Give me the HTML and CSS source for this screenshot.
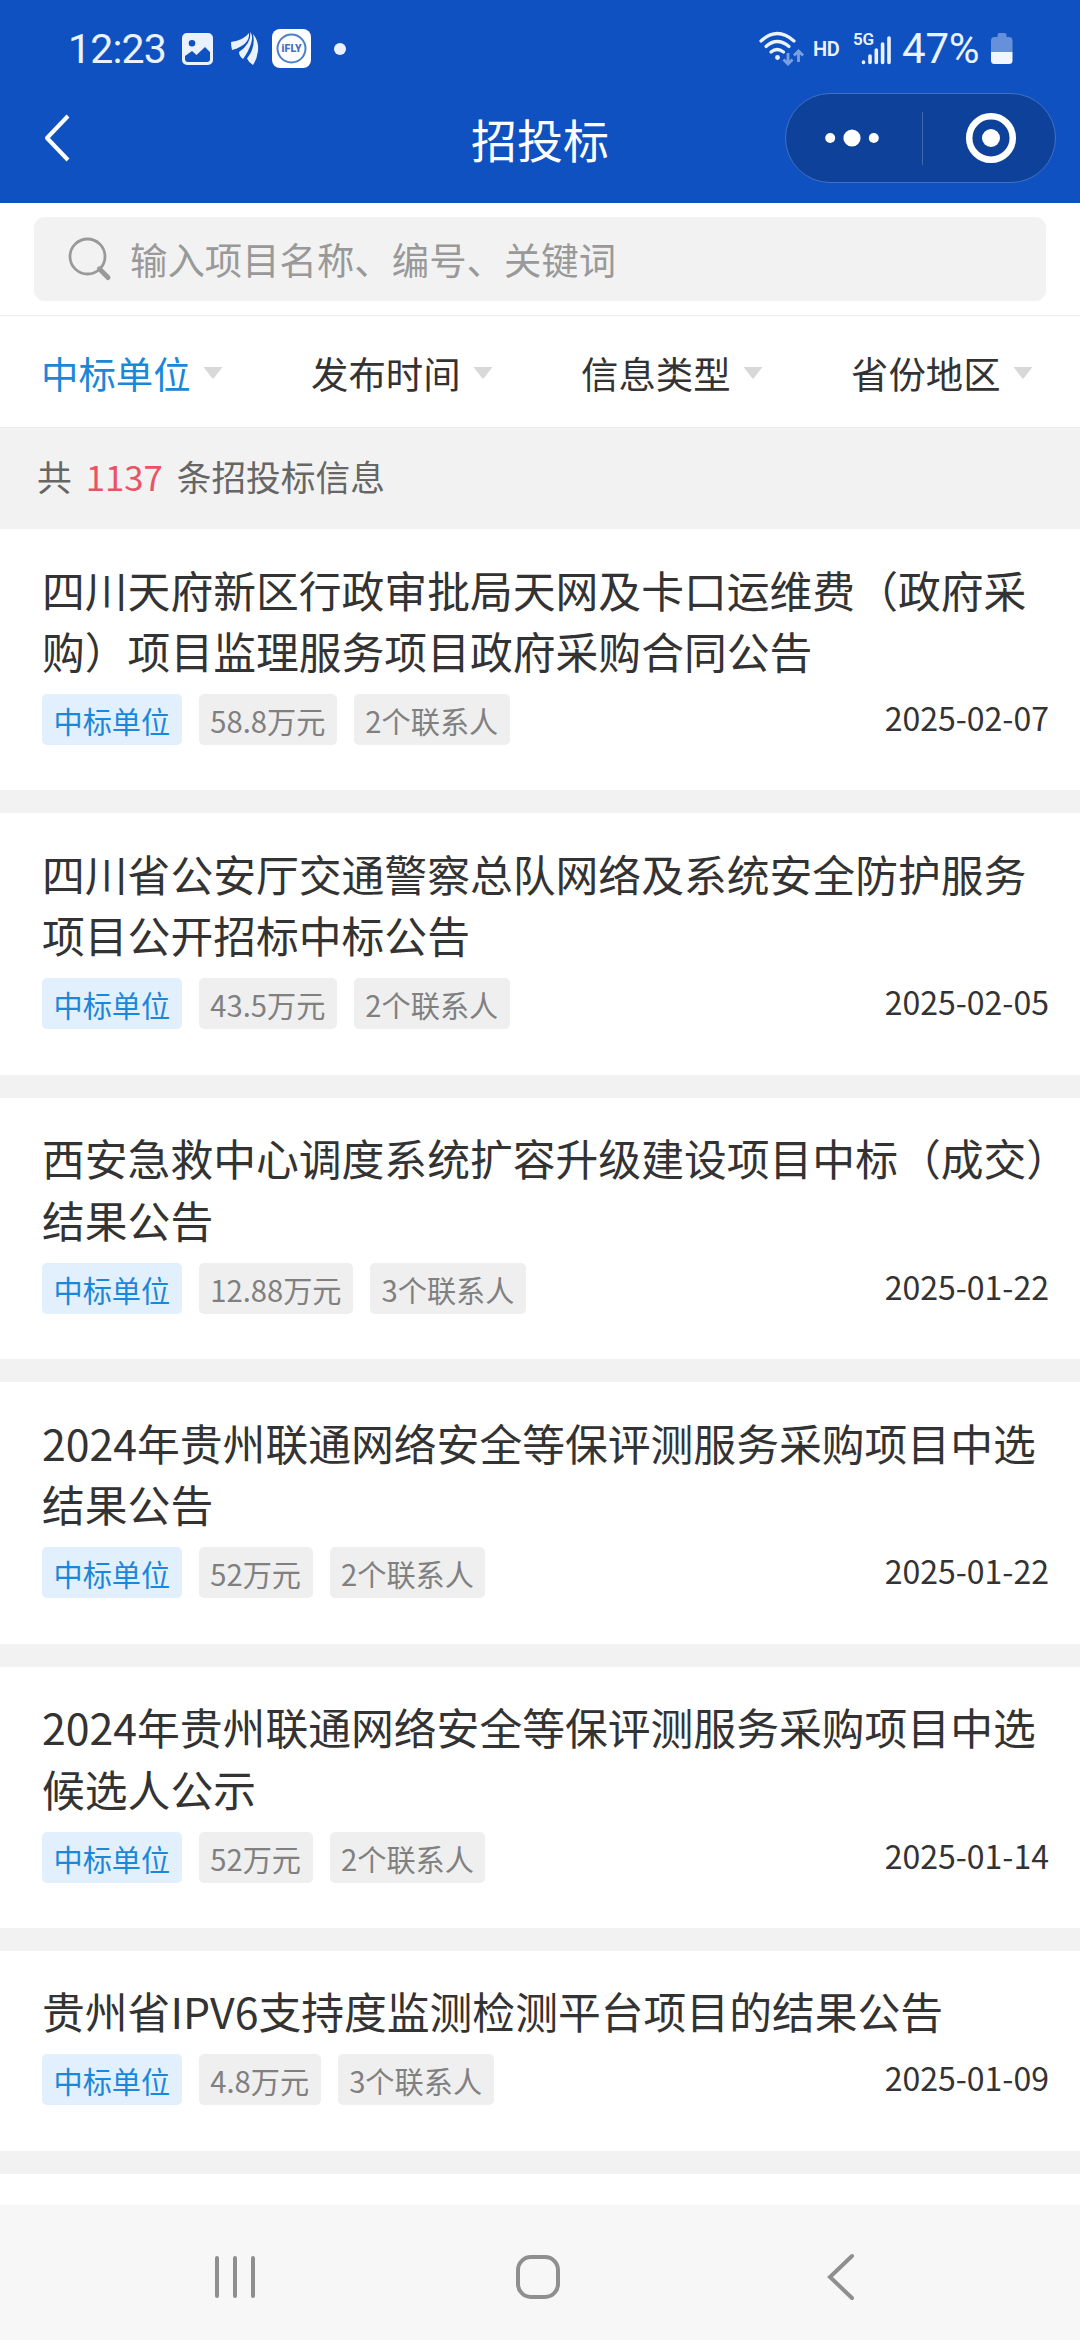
FILE: index.html
```
<!DOCTYPE html>
<html lang="zh-CN">

<head>
  <meta charset="UTF-8">
  <meta name="viewport" content="width=device-width, initial-scale=1.0">
  <title>招投标</title>
  <link rel="stylesheet" href="styles.css">
</head>

<body>
  <header>
    <!--Phone status bar-->
    <div class="status">
      <div class="status-left">
        <span class="clock">12:23</span>
        <svg class="ico-pic" width="31" height="32" viewBox="0 0 31 32">
          <path fill="#eaf2ff" fill-rule="evenodd" d="M5 0h21a5 5 0 0 1 5 5v22a5 5 0 0 1-5 5H5a5 5 0 0 1-5-5V5a5 5 0 0 1 5-5zM10 7a3.300 3.300 0 1 0 0 6.600a3.300 3.300 0 0 0 0-6.600zM3 23v3q0 3 3 3h19q3 0 3-3v-7l-5-5-8.500 8-4.500-4z" />
        </svg>
        <svg class="ico-wing" width="28" height="34" viewBox="0 0 28 34">
          <g fill="#eaf2ff">
            <path d="M0 10Q13 8 18 1Q19 13 1 18Q0 14 0 10z" />
            <path d="M19.500 0Q22 4 20.500 10Q18 19 12 27Q8 24 8 20Q20 12 19.500 0z" />
            <path d="M22 2Q28 9 27 19Q26 27 22 33Q18 31 16 26.500Q25 15 22 2z" />
          </g>
        </svg>
        <svg class="ico-fly" width="39" height="39" viewBox="0 0 39 39">
          <rect width="39" height="39" rx="8" fill="#fff" />
          <circle cx="19.500" cy="19.500" r="14" fill="none" stroke="#4a80cc" stroke-width="2" />
          <text x="19.500" y="23.200" text-anchor="middle" textLength="20">iFLY</text>
        </svg>
        <span class="dot"></span>
      </div>
      <div class="status-right">
        <svg width="46" height="36" viewBox="0 0 46 36">
          <g fill="none" stroke="#eaf2ff" stroke-width="3.200" stroke-linecap="round">
            <path d="M3 10Q19-5 36 10" />
            <path d="M8 15.500Q19 5.500 31 15.500" />
            <path d="M13 21Q19 16 25.500 21" />
          </g>
          <circle cx="19.500" cy="26.500" r="2.400" fill="#eaf2ff" />
          <path fill="none" stroke="#7ba0e2" stroke-width="2.800" d="M30 22v11M25.500 28.500l4.500 4.500 4.500-4.500M40.500 31V20M36 24.500l4.500-4.500 4.500 4.500" />
        </svg>
        <span class="hd">HD</span>
        <svg class="ico-signal" width="40" height="36" viewBox="0 0 40 36">
          <text x="0" y="14" textLength="21">5G</text>
          <path fill="none" stroke="#eaf2ff" stroke-width="3.600" stroke-linecap="round" d="M10.500 31v.4M17 25v6.500M23.300 19v12.500M29.600 13v18.500M36 7v24.500" />
        </svg>
        <span class="percent">47%</span>
        <svg class="ico-battery" width="22" height="32" viewBox="0 0 22 32">
          <path fill="#6690da" d="M6.500 4V2q0-2 2-2h5q2 0 2 2v2h2.500q3.500 0 3.500 3.500V19H0V7.500Q0 4 3.500 4z" />
          <path fill="#f0f5ff" d="M0 19h21.500v8.500q0 3.500-3.500 3.500h-14.500q-3.500 0-3.500-3.500z" />
        </svg>
      </div>
    </div>

    <!--Mini program title bar-->
    <div class="navbar">
      <svg class="back" width="30" height="52" viewBox="0 0 30 52">
        <path d="M26 4L5 26l21 22" fill="none" stroke="#fff" stroke-width="4" stroke-linejoin="round" />
      </svg>
      <h1>招投标</h1>
      <div class="capsule">
        <svg width="54" height="20" viewBox="0 0 54 20" fill="#fff">
          <circle cx="5.200" cy="10" r="5" />
          <circle cx="27" cy="10" r="8.600" />
          <circle cx="48.800" cy="10" r="5" />
        </svg>
        <i></i>
        <svg width="52" height="52" viewBox="0 0 52 52">
          <circle cx="26" cy="26" r="21.800" fill="none" stroke="#fff" stroke-width="6.500" />
          <circle cx="26" cy="26" r="9" fill="#fff" />
        </svg>
      </div>
    </div>
  </header>

  <div class="search">
    <div class="search-box">
      <svg width="44" height="44" viewBox="0 0 44 44" fill="none" stroke="#999">
        <circle cx="19.500" cy="19.500" r="17.500" stroke-width="2.800" />
        <path d="M31.500 32l8.500 8.500" stroke-width="5" stroke-linecap="round" />
      </svg>
      <span>输入项目名称、编号、关键词</span>
    </div>
  </div>

  <div class="filters">
    <div class="filter active">中标单位<svg width="20" height="12" viewBox="0 0 20 12"><path d="M.5 0h19l-8.500 11q-1 1-2 0z" /></svg></div>
    <div class="filter">发布时间<svg width="20" height="12" viewBox="0 0 20 12"><path d="M.5 0h19l-8.500 11q-1 1-2 0z" /></svg></div>
    <div class="filter">信息类型<svg width="20" height="12" viewBox="0 0 20 12"><path d="M.5 0h19l-8.500 11q-1 1-2 0z" /></svg></div>
    <div class="filter">省份地区<svg width="20" height="12" viewBox="0 0 20 12"><path d="M.5 0h19l-8.500 11q-1 1-2 0z" /></svg></div>
  </div>

  <div class="count">共<b>1137</b>条招投标信息</div>

  <main>
    <div class="card">
      <h2>四川天府新区行政审批局天网及卡口运维费（政府采<br>购）项目监理服务项目政府采购合同公告</h2>
      <div class="meta">
        <span class="tag blue">中标单位</span><span class="tag">58.8万元</span><span class="tag">2个联系人</span>
        <time>2025-02-07</time>
      </div>
    </div>
    <div class="card">
      <h2>四川省公安厅交通警察总队网络及系统安全防护服务<br>项目公开招标中标公告</h2>
      <div class="meta">
        <span class="tag blue">中标单位</span><span class="tag">43.5万元</span><span class="tag">2个联系人</span>
        <time>2025-02-05</time>
      </div>
    </div>
    <div class="card">
      <h2>西安急救中心调度系统扩容升级建设项目中标（成交）<br>结果公告</h2>
      <div class="meta">
        <span class="tag blue">中标单位</span><span class="tag">12.88万元</span><span class="tag">3个联系人</span>
        <time>2025-01-22</time>
      </div>
    </div>
    <div class="card">
      <h2>2024年贵州联通网络安全等保评测服务采购项目中选<br>结果公告</h2>
      <div class="meta">
        <span class="tag blue">中标单位</span><span class="tag">52万元</span><span class="tag">2个联系人</span>
        <time>2025-01-22</time>
      </div>
    </div>
    <div class="card">
      <h2>2024年贵州联通网络安全等保评测服务采购项目中选<br>候选人公示</h2>
      <div class="meta">
        <span class="tag blue">中标单位</span><span class="tag">52万元</span><span class="tag">2个联系人</span>
        <time>2025-01-14</time>
      </div>
    </div>
    <div class="card">
      <h2>贵州省IPV6支持度监测检测平台项目的结果公告</h2>
      <div class="meta">
        <span class="tag blue">中标单位</span><span class="tag">4.8万元</span><span class="tag">3个联系人</span>
        <time>2025-01-09</time>
      </div>
    </div>
  </main>

  <!--Android navigation keys-->
  <footer>
    <svg width="44" height="48" viewBox="0 0 44 48"><path d="M4 5v38M22 5v38M40 5v38" /></svg>
    <svg class="home" width="48" height="48" viewBox="0 0 48 48"><rect x="4" y="4" width="40" height="40" rx="13" /></svg>
    <svg width="32" height="48" viewBox="0 0 32 48"><path d="M27 3L5 24l22 21" /></svg>
  </footer>
</body>

</html>
```
FILE: styles.css
```
* {
  box-sizing: border-box;
}

body {
  margin: 0;
  height: 2340px;
  overflow: hidden;
  display: flex;
  flex-direction: column;
  background-color: #fff;
  color: #333;
  font-family: "Noto Sans CJK SC", sans-serif;
}

svg {
  display: block;
  flex: none;
  overflow: visible;
}

header {
  height: 203px;
  flex: none;
  background-color: #1051c1;
  color: #fff;
}

/* status bar */
.status {
  height: 93px;
  padding: 4px 67px 0 68px;
  display: flex;
  justify-content: space-between;
  align-items: center;
  font-family: Roboto, sans-serif;
  color: #eaf2ff;
}

.status-left,
.status-right {
  display: flex;
  align-items: center;
}

.clock {
  width: 114px;
  font-size: 41px;
  letter-spacing: -0.800px;
}

.ico-wing {
  margin-left: 18px;
}

.ico-fly {
  margin-left: 13px;
}

.ico-fly text {
  font: 900 10.500px Roboto, sans-serif;
  fill: #4470c4;
}

.dot {
  width: 12px;
  height: 12px;
  margin-left: 23px;
  border-radius: 50%;
  background-color: #eaf2ff;
}

.hd {
  width: 27px;
  margin-left: 9px;
  font-size: 20px;
  font-weight: 600;
  letter-spacing: -0.500px;
}

.ico-signal {
  margin-left: 13px;
}

.ico-signal text {
  font: 600 17px Roboto, sans-serif;
  fill: #eaf2ff;
}

.percent {
  width: 82px;
  margin-left: 9px;
  font-size: 42px;
  letter-spacing: -0.200px;
}

.ico-battery {
  margin-left: 7px;
}

/* title bar */
.navbar {
  height: 90px;
  padding: 0 24px 0 42px;
  display: grid;
  grid-template-columns: 1fr auto 1fr;
  align-items: center;
}

.navbar h1 {
  margin: 0 18px 0 0;
  font-size: 46px;
  font-weight: 400;
  line-height: 60px;
}

.capsule {
  width: 271px;
  height: 90px;
  padding: 0 38px 0 39px;
  justify-self: end;
  display: flex;
  align-items: center;
  justify-content: space-between;
  border: 1px solid #4070c4;
  border-radius: 45px;
  background-color: #0e4199;
}

.capsule i {
  width: 1px;
  height: 53px;
  background-color: #3e67ad;
}

/* search */
.search {
  height: 113px;
  flex: none;
  padding: 14px 34px 0;
  border-bottom: 1px solid #ececec;
}

.search-box {
  height: 84px;
  padding-left: 34px;
  display: flex;
  align-items: center;
  gap: 18px;
  border-radius: 11px;
  background-color: #f2f2f2;
  color: #999;
  font-size: 37.400px;
}

.filters {
  height: 112px;
  flex: none;
  display: grid;
  grid-template-columns: repeat(4, 270px);
  border-bottom: 1px solid #ececec;
}

.filter {
  padding: 2px 0 0 41px;
  display: flex;
  align-items: center;
  gap: 12px;
  font-size: 37.400px;
}

.filter.active {
  color: #1b87d9;
}

.filter svg {
  fill: #d8d8d8;
}

.count {
  height: 101px;
  flex: none;
  padding-left: 37px;
  background-color: #f2f2f2;
  color: #666;
  font-size: 34.700px;
  line-height: 97px;
}

.count b {
  margin: 0 14px;
  color: #ea5365;
  font-weight: 400;
}

/* result list */
main {
  flex: 1;
  min-height: 0;
}

.card {
  padding: 29.500px 31px 45.400px 42px;
  border-bottom: 23px solid #f2f2f2;
}

.card h2 {
  margin: 0;
  font-size: 42.800px;
  font-weight: 400;
  line-height: 61.500px;
  white-space: nowrap;
}

.meta {
  height: 51px;
  margin-top: 12.500px;
  display: flex;
  align-items: center;
  gap: 17px;
}

.tag {
  height: 51px;
  padding: 0 11.500px;
  border-radius: 5px;
  background-color: #efefef;
  color: #808080;
  font-size: 29.200px;
  line-height: 53px;
}

.tag.blue {
  background-color: #e2f0fe;
  color: #1b87d9;
}

.meta time {
  margin: -5px 0 0 auto;
  font-size: 32px;
}

/* system keys */
footer {
  height: 135px;
  flex: none;
  padding: 9px 223px 0 213px;
  display: flex;
  justify-content: space-between;
  align-items: center;
  background-color: #f7f7f7;
}

footer svg {
  fill: none;
  stroke: #8f8f8f;
  stroke-width: 4;
  stroke-linecap: round;
}

footer .home {
  margin-left: -6px;
}
```
